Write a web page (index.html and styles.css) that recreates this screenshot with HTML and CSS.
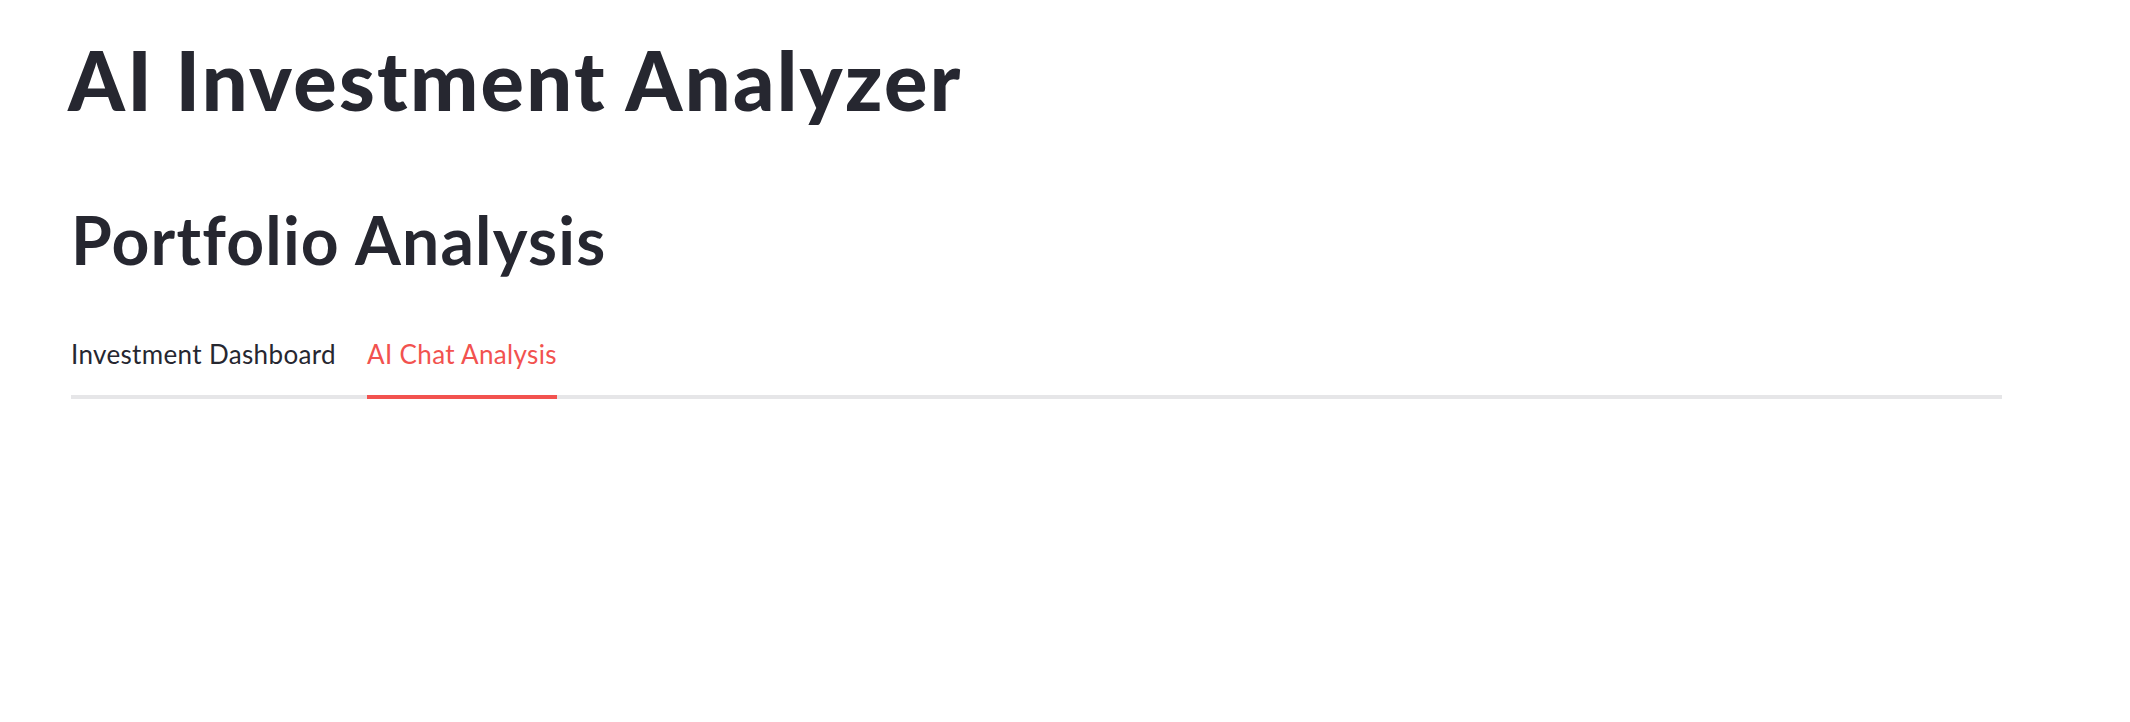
FILE: index.html
```html
<!DOCTYPE html>
<html lang="en">
<head>
<meta charset="utf-8">
<title>AI Investment Analyzer</title>
<link rel="stylesheet" href="styles.css">
</head>
<body>
<main class="main">
  <h1 class="title">AI Investment Analyzer</h1>
  <h2 class="subtitle">Portfolio Analysis</h2>
  <div class="tabs">
    <div class="tab">Investment Dashboard</div>
    <div class="tab tab-active">AI Chat Analysis</div>
  </div>
</main>
</body>
</html>
```
FILE: styles.css
```css
html, body {
  margin: 0;
  padding: 0;
  background: #ffffff;
}
body {
  width: 2130px;
  height: 722px;
  overflow: hidden;
  font-family: Lato, "Noto Sans", "Liberation Sans", sans-serif;
  color: #262730;
}
.main {
  display: flex;
  flex-direction: column;
  padding: 31px 128px 0 68px;
}
.title {
  margin: 0;
  font-size: 81px;
  line-height: 97px;
  font-weight: 900;
  letter-spacing: 2.3px;
}
.subtitle {
  margin: 72px 0 0 3px;
  font-size: 66px;
  line-height: 79px;
  font-weight: 700;
  letter-spacing: 1.2px;
}
.tabs {
  margin: 60px 0 0 3px;
  display: flex;
  gap: 31px;
  border-bottom: 4px solid #e6e6e8;
}
.tab {
  font-size: 26px;
  line-height: 30px;
  letter-spacing: 0.35px;
  padding-bottom: 26px;
  margin-bottom: -4px;
  border-bottom: 4px solid transparent;
}
.tab-active {
  color: #f2524f;
  border-bottom-color: #f2524f;
}
```
